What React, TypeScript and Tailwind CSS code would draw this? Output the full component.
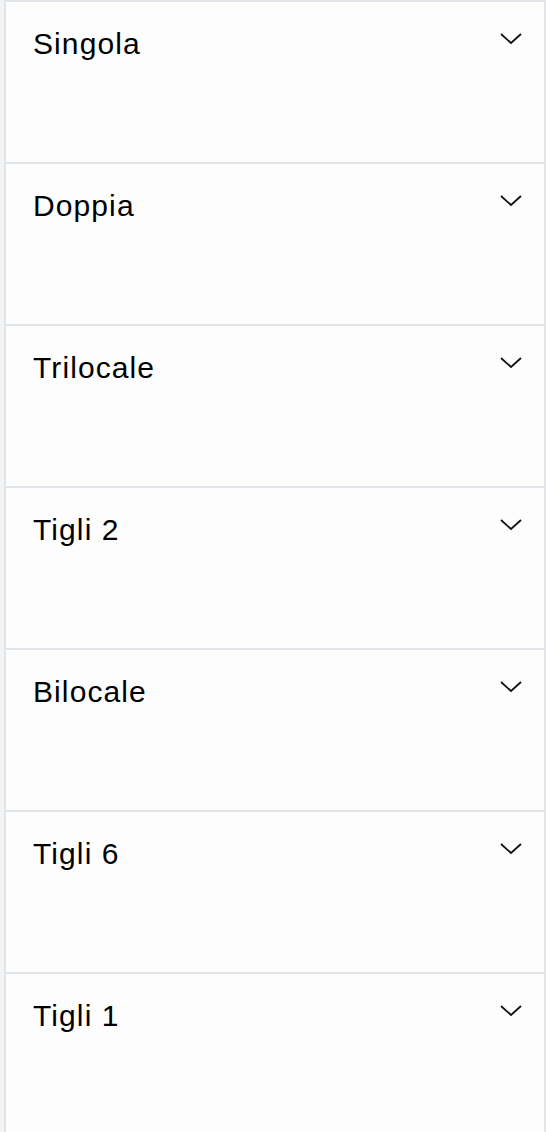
import React from "react";

const items = ["Singola", "Doppia", "Trilocale", "Tigli 2", "Bilocale", "Tigli 6", "Tigli 1"];

function Chevron() {
  return (
    <svg width="24" height="14" viewBox="0 0 24 14" fill="none" className="mt-[6px]">
      <path d="M2 2 L12 11 L22 2" stroke="#111" strokeWidth="1.8" strokeLinecap="butt" strokeLinejoin="miter" />
    </svg>
  );
}

export default function App() {
  return (
    <div className="min-h-[1132px] bg-[#f3f4f6] pl-1" style={{ fontFamily: "'Liberation Sans', Arial, sans-serif" }}>
      <div className="min-h-[1132px] border-x-2 border-[#e1e4e8] bg-[#fdfdfd]">
        {items.map((t) => (
          <div key={t} className="flex h-[162px] items-start justify-between border-t-2 border-[#e1e4e8] pl-[27px] pr-[21px] pt-[24px]">
            <span className="text-[30px] leading-[36px] tracking-[1.1px] text-black">{t}</span>
            <Chevron />
          </div>
        ))}
      </div>
    </div>
  );
}
